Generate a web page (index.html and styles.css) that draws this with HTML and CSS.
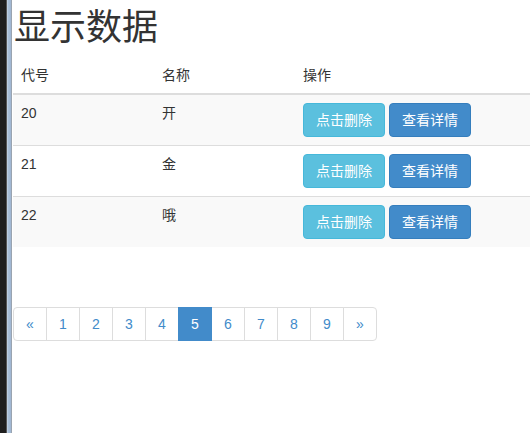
FILE: index.html
```html
<!DOCTYPE html>
<html>
<head>
<meta charset="utf-8">
<link rel="stylesheet" href="styles.css">
</head>
<body>
<div class="frame">
  <div class="edge-dark"></div>
  <div class="edge-blue"></div>
  <div class="page">
    <h1 class="title">显示数据</h1>
    <table class="data">
      <thead>
        <tr><th class="c1">代号</th><th class="c2">名称</th><th>操作</th></tr>
      </thead>
      <tbody>
        <tr class="odd"><td>20</td><td>开</td><td><button class="btn btn-info">点击删除</button> <button class="btn btn-primary">查看详情</button></td></tr>
        <tr><td>21</td><td>金</td><td><button class="btn btn-info">点击删除</button> <button class="btn btn-primary">查看详情</button></td></tr>
        <tr class="odd"><td>22</td><td>哦</td><td><button class="btn btn-info">点击删除</button> <button class="btn btn-primary">查看详情</button></td></tr>
      </tbody>
    </table>
    <ul class="pagination">
      <li><a>&laquo;</a></li>
      <li><a>1</a></li>
      <li><a>2</a></li>
      <li><a>3</a></li>
      <li><a>4</a></li>
      <li class="active"><a>5</a></li>
      <li><a>6</a></li>
      <li><a>7</a></li>
      <li><a>8</a></li>
      <li><a>9</a></li>
      <li><a>&raquo;</a></li>
    </ul>
  </div>
</div>
</body>
</html>
```
FILE: styles.css
```css
html, body {
  margin: 0;
  padding: 0;
  background: #fff;
}
body {
  font-family: "Liberation Sans", "Noto Sans CJK SC", sans-serif;
  font-size: 14px;
  line-height: 20px;
  color: #333;
}
.frame {
  display: flex;
  height: 433px;
  overflow: hidden;
}
.edge-dark {
  width: 6px;
  flex: none;
  background: #1e1e1e;
  border-right: 1px solid #555;
}
.edge-blue {
  width: 4px;
  flex: none;
  background: linear-gradient(to right, #c4d4e6, #a6bcd6 40%, #9fb6d2);
  border-right: 1px solid #9aa4b0;
}
.page {
  flex: 1;
  padding-left: 1px;
  min-width: 0;
}
.title {
  font-family: "Liberation Serif", "Noto Sans CJK SC", serif;
  font-weight: normal;
  font-size: 36px;
  line-height: 40px;
  margin: 8px 0 9px 1px;
  color: #333;
}
.data {
  border-collapse: collapse;
  border-spacing: 0;
  width: 560px;
}
.data th, .data td {
  padding: 8px;
  text-align: left;
  vertical-align: top;
}
.data th {
  font-weight: normal;
  border-bottom: 2px solid #ddd;
}
.data th.c1, .data th.c2 {
  width: 125px;
}
.data td {
  border-top: 1px solid #ddd;
}
.data tbody tr:first-child td {
  border-top: 0;
}
.data tr.odd td {
  background: #f9f9f9;
}
.btn {
  display: inline-block;
  box-sizing: border-box;
  width: 82px;
  font-family: "Liberation Sans", "Noto Sans CJK SC", sans-serif;
  font-size: 14px;
  line-height: 20px;
  padding: 6px 0;
  text-align: center;
  border: 1px solid transparent;
  border-radius: 4px;
  color: #fff;
  margin: 0;
  vertical-align: middle;
}
.btn-info {
  background: #5bc0de;
  border-color: #46b8da;
}
.btn-primary {
  background: #428bca;
  border-color: #357ebd;
}
.pagination {
  display: flex;
  list-style: none;
  padding: 0;
  margin: 60px 0 0 0;
}
.pagination li a {
  display: block;
  box-sizing: border-box;
  width: 34px;
  text-align: center;
  padding: 6px 0;
  line-height: 20px;
  color: #428bca;
  background: #fff;
  border: 1px solid #ddd;
  margin-left: -1px;
}
.pagination li:first-child a {
  margin-left: 0;
  border-radius: 4px 0 0 4px;
}
.pagination li:last-child a {
  border-radius: 0 4px 4px 0;
}
.pagination li.active a {
  background: #428bca;
  border-color: #428bca;
  color: #fff;
  position: relative;
  z-index: 1;
}
```
